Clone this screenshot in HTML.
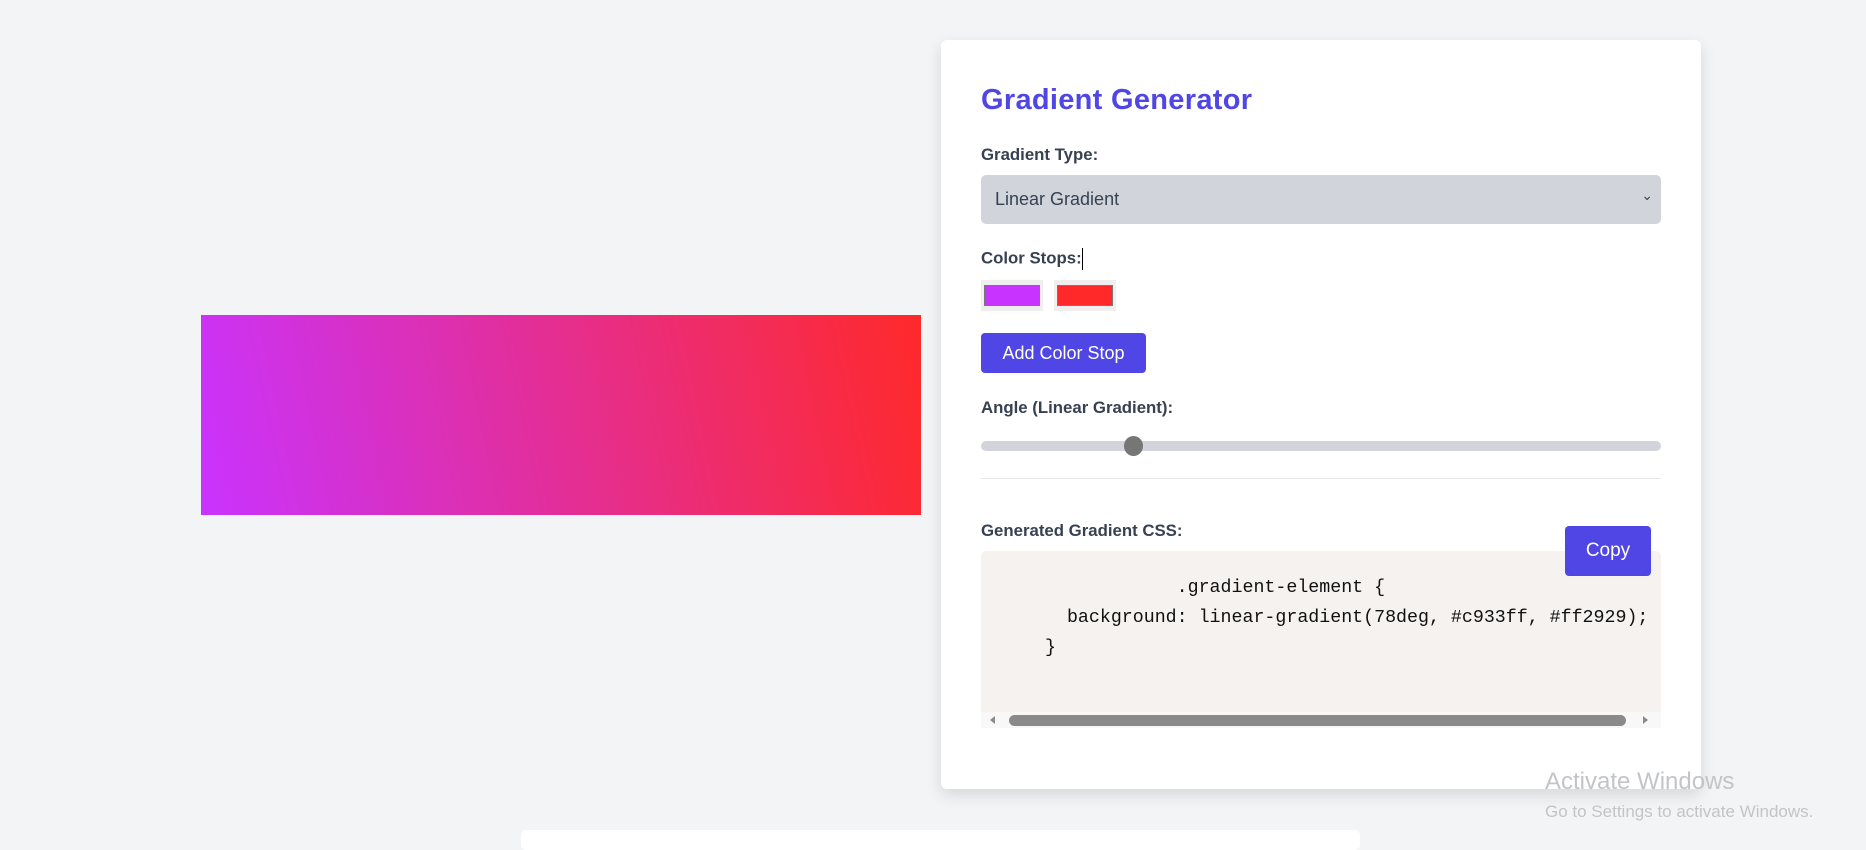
<!DOCTYPE html>
<html><head><style>
*{box-sizing:border-box;margin:0;padding:0}
body{width:1866px;height:838px;background:#f3f4f6;position:relative;overflow:hidden;font-family:"Liberation Sans",sans-serif}
.a{position:absolute}
.lbl{position:absolute;left:981px;font-weight:bold;font-size:16.8px;color:#374151}
</style></head><body>
<div class="a" style="left:201px;top:315px;width:720px;height:200px;background:linear-gradient(78deg,#c933ff,#ff2929)"></div>
<div class="a" style="left:941px;top:40px;width:760px;height:749px;background:#fff;border-radius:6px;box-shadow:0 6px 16px rgba(0,0,0,.12)"></div>
<div class="a" style="left:981px;top:84px;font-size:29px;font-weight:bold;color:#4f46e5;letter-spacing:0.3px">Gradient Generator</div>
<div class="lbl" style="top:145px">Gradient Type:</div>
<div class="a" style="left:981px;top:175px;width:680px;height:49px;background:#d1d5db;border-radius:5px;font-size:18px;color:#374151;padding:14px 0 0 14px">Linear Gradient<span style="position:absolute;right:8px;top:12px;font-size:14px">&#8964;</span></div>
<div class="lbl" style="top:248px">Color Stops:<span style="display:inline-block;width:1px;height:22px;background:#000;vertical-align:middle"></span></div>
<div class="a" style="left:981px;top:280px;width:62px;height:31px;background:#efefef;padding:5px 3px"><div style="width:100%;height:100%;background:#c933ff;border:1px solid #777"></div></div>
<div class="a" style="left:1054px;top:280px;width:62px;height:31px;background:#efefef;padding:5px 3px"><div style="width:100%;height:100%;background:#ff2929;border:1px solid #777"></div></div>
<div class="a" style="left:981px;top:333px;width:165px;height:40px;background:#4f46e5;border-radius:4px;color:#fff;font-size:18px;text-align:center;line-height:40px">Add Color Stop</div>
<div class="lbl" style="top:398px">Angle (Linear Gradient):</div>
<div class="a" style="left:981px;top:441px;width:680px;height:10px;background:#d1d5db;border-radius:5px"></div>
<div class="a" style="left:1124px;top:436px;width:19px;height:20px;background:#767676;border-radius:50%"></div>
<div class="a" style="left:981px;top:478px;width:680px;height:1px;background:#e5e7eb"></div>
<div class="lbl" style="top:521px">Generated Gradient CSS:</div>
<div class="a" style="left:981px;top:551px;width:680px;height:177px;background:#f5f2ef;border-radius:5px 5px 0 0"></div>
<div class="a" style="left:981px;top:712px;width:680px;height:16px;background:#f8f8f8"></div>
<div class="a" style="left:1009px;top:715px;width:617px;height:11px;background:#8a8a8a;border-radius:6px"></div>
<div class="a" style="left:990px;top:716px;width:0;height:0;border-top:4px solid transparent;border-bottom:4px solid transparent;border-right:5px solid #8a8a8a"></div>
<div class="a" style="left:1643px;top:716px;width:0;height:0;border-top:4px solid transparent;border-bottom:4px solid transparent;border-left:5px solid #8a8a8a"></div>
<pre class="a" style="left:1045px;top:573px;font-family:'Liberation Mono',monospace;font-size:18.3px;line-height:30px;color:#111">            .gradient-element {
  background: linear-gradient(78deg, #c933ff, #ff2929);
}</pre>
<div class="a" style="left:1565px;top:526px;width:86px;height:50px;background:#4f46e5;border-radius:4px;color:#fff;font-size:19px;text-align:center;line-height:50px">Copy</div>
<div class="a" style="left:1545px;top:768px;font-size:24px;color:#c2c4c8">Activate Windows</div>
<div class="a" style="left:1545px;top:802px;font-size:17px;color:#c2c4c8">Go to Settings to activate Windows.</div>
<div class="a" style="left:521px;top:830px;width:839px;height:20px;background:#fff;border-radius:5px"></div>
</body></html>
